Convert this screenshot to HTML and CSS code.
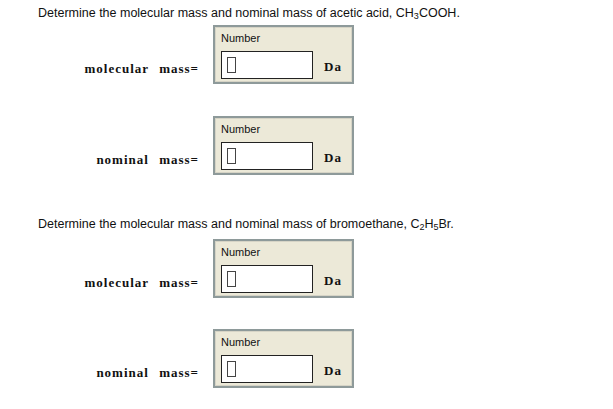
FILE: index.html
```html
<!DOCTYPE html>
<html lang="en">
<head>
    <meta charset="UTF-8">
    <title>Molecular mass</title>
    <link rel="stylesheet" href="styles.css">
</head>
<body>
    <div class="page">
        <div class="question first">
            <p class="prompt">Determine the molecular mass and nominal mass of acetic acid, CH<sub>3</sub>COOH.</p>
            <div class="row">
                <div class="label">molecular mass=</div>
                <div class="answer">
                    <div class="hint">Number</div>
                    <div class="entry">
                        <div class="field"><span class="cursor"></span></div>
                        <span class="unit">Da</span>
                    </div>
                </div>
            </div>
            <div class="row">
                <div class="label">nominal mass=</div>
                <div class="answer">
                    <div class="hint">Number</div>
                    <div class="entry">
                        <div class="field"><span class="cursor"></span></div>
                        <span class="unit">Da</span>
                    </div>
                </div>
            </div>
        </div>
        <div class="question second">
            <p class="prompt">Determine the molecular mass and nominal mass of bromoethane, C<sub>2</sub>H<sub>5</sub>Br.</p>
            <div class="row">
                <div class="label">molecular mass=</div>
                <div class="answer">
                    <div class="hint">Number</div>
                    <div class="entry">
                        <div class="field"><span class="cursor"></span></div>
                        <span class="unit">Da</span>
                    </div>
                </div>
            </div>
            <div class="row">
                <div class="label">nominal mass=</div>
                <div class="answer">
                    <div class="hint">Number</div>
                    <div class="entry">
                        <div class="field"><span class="cursor"></span></div>
                        <span class="unit">Da</span>
                    </div>
                </div>
            </div>
        </div>
    </div>
</body>
</html>
```

FILE: styles.css
```css
*{
    padding: 0;
    margin: 0;
    box-sizing: border-box;
}
body{
    background-color: #fff;
    color: #111;
    font-family: "Liberation Sans", Arial, sans-serif;
}
.page{
    padding-left: 38px;
}
.question{
    display: flex;
    flex-direction: column;
}
.question.first{
    padding-top: 5px;
}
.question.second{
    padding-top: 41px;
}
.prompt{
    font-size: 12.5px;
    line-height: 16px;
}
.prompt sub{
    font-size: 9px;
    line-height: 0;
    vertical-align: -2px;
}
.first .prompt{
    margin-bottom: 4px;
}
.second .prompt{
    margin-bottom: 7px;
}
.row{
    display: flex;
    align-items: flex-end;
    margin-bottom: 32px;
}
.second .row{
    margin-bottom: 31px;
}
.row:last-child{
    margin-bottom: 0;
}
.label{
    width: 161px;
    margin-right: 14px;
    padding-bottom: 7px;
    text-align: right;
    font-family: "Liberation Serif", "Times New Roman", serif;
    font-weight: bold;
    font-size: 13px;
    line-height: 16px;
    letter-spacing: 1px;
    word-spacing: 6px;
}
/* beige answer panel */
.answer{
    width: 141px;
    height: 59px;
    background-color: #ece9d8;
    border: 2px solid #8e9a9a;
    box-shadow: inset 0 0 0 1px #d6d4c6;
    padding: 5px 0 0 6px;
}
.hint{
    font-size: 11px;
    line-height: 13px;
    margin-bottom: 6px;
}
.entry{
    display: flex;
    align-items: center;
}
.field{
    width: 92px;
    height: 28px;
    background-color: #fff;
    border: 1px solid #222;
    display: flex;
    align-items: center;
    padding-left: 5px;
}
.cursor{
    width: 9px;
    height: 16px;
    border: 1px solid #444;
}
.unit{
    margin-left: 11px;
    font-family: "Liberation Serif", "Times New Roman", serif;
    font-weight: bold;
    font-size: 13px;
    letter-spacing: 1px;
    padding-top: 4px;
}
```
